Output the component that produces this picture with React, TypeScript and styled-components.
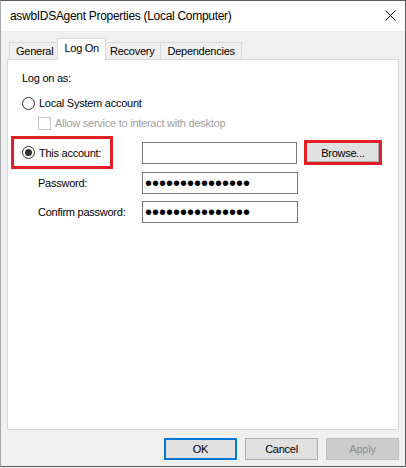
import React from "react";
import styled, { createGlobalStyle, css } from "styled-components";

const Global = createGlobalStyle`
  html, body { margin: 0; padding: 0; background: #f0f0f0; }
  body { font-family: "Liberation Sans", Arial, sans-serif; color: #000; }
  * { box-sizing: border-box; }
`;

const Window = styled.div`
  width: 406px;
  height: 467px;
  display: flex;
  flex-direction: column;
  border: 1px solid #5c5c5c;
  border-left-color: #a6a6a6;
  background: #f0f0f0;
`;

const TitleBar = styled.div`
  height: 30px;
  flex: none;
  background: #fff;
  display: flex;
  align-items: center;
  justify-content: space-between;
  padding: 0 9px 1px 9px;
`;

const Title = styled.span`
  font-size: 12px;
  letter-spacing: -0.3px;
`;

const CloseIcon = styled.svg`
  width: 11px;
  height: 11px;
  display: block;
`;

const Body = styled.div`
  flex: 1;
  display: flex;
  flex-direction: column;
  padding: 7px 6px 6px 6px;
`;

const TabStrip = styled.div`
  height: 21px;
  flex: none;
  display: flex;
  align-items: flex-end;
  padding-left: 3px;
`;

const Tab = styled.div<{ $active?: boolean }>`
  height: 17px;
  padding: 0 6px;
  margin-left: -1px;
  border: 1px solid #d9d9d9;
  border-bottom: none;
  background: #f0f0f0;
  font-size: 11px;
  letter-spacing: -0.25px;
  line-height: 16px;
  white-space: nowrap;
  ${(p) =>
    p.$active &&
    css`
      position: relative;
      z-index: 1;
      height: 22px;
      margin: 0 -2px -1px -3px;
      background: #fff;
      line-height: 18px;
    `}
`;

const Panel = styled.div`
  height: 371px;
  flex: none;
  background: #fff;
  border: 1px solid #d9d9d9;
  padding: 11px 0 0 3px;
  display: flex;
  flex-direction: column;
  align-items: flex-start;
`;

const Text = styled.span<{ $disabled?: boolean }>`
  font-size: 11px;
  letter-spacing: -0.25px;
  line-height: 14px;
  white-space: nowrap;
  color: ${(p) => (p.$disabled ? "#a0a0a0" : "#000")};
`;

const Heading = styled(Text)`
  margin-left: 11px;
  display: block;
`;

const OptionRow = styled.label<{ $indent: number; $top: number }>`
  display: flex;
  align-items: center;
  gap: 4px;
  height: 14px;
  margin-left: ${(p) => p.$indent}px;
  margin-top: ${(p) => p.$top}px;
`;

const Radio = styled.span<{ $checked?: boolean }>`
  width: 13px;
  height: 13px;
  flex: none;
  border-radius: 50%;
  border: 1px solid #333;
  background: #fff;
  display: inline-flex;
  align-items: center;
  justify-content: center;
  &::after {
    content: "";
    width: 7px;
    height: 7px;
    border-radius: 50%;
    background: #333;
    display: ${(p) => (p.$checked ? "block" : "none")};
  }
`;

const CheckBox = styled.span`
  width: 13px;
  height: 13px;
  flex: none;
  border: 1px solid #c6c6c6;
  background: #fff;
`;

const AccountGrid = styled.div`
  margin-top: 6px;
  display: grid;
  grid-template-columns: 131px 162px auto;
  grid-template-rows: 33px 25px 29px;
  align-items: end;
`;

const Highlight = styled.div`
  border: 3px solid #e31e25;
  align-self: center;
`;

const AccountHighlight = styled(Highlight)`
  width: 102px;
  height: 33px;
  display: flex;
  align-items: center;
  gap: 4px;
  padding-left: 8px;
`;

const FieldLabel = styled(Text)`
  padding-left: 27px;
  line-height: 22px;
`;

const TextBox = styled.input<{ $width: number }>`
  width: ${(p) => p.$width}px;
  height: 22px;
  margin: 0;
  padding: 0 0 0 2px;
  border: 1px solid #7a7a7a;
  border-radius: 0;
  background: #fff;
  outline: none;
  font-family: "Liberation Sans", Arial, sans-serif;
  font-size: 20px;
  line-height: 20px;
  color: #000;
  align-self: ${(p) => (p.$width === 155 ? "center" : "end")};
`;

const BaseButton = styled.button`
  margin: 0;
  padding: 0;
  font-family: "Liberation Sans", Arial, sans-serif;
  font-size: 11px;
  letter-spacing: -0.25px;
  color: #000;
  background: #e1e1e1;
  border: 1px solid #adadad;
  border-radius: 0;
`;

const BrowseButton = styled(BaseButton)`
  display: block;
  width: 72px;
  height: 19px;
  border-left-color: #e1e1e1;
  border-top-color: #e1e1e1;
`;

const Footer = styled.div`
  margin-top: 8px;
  display: flex;
  justify-content: flex-end;
  gap: 8px;
`;

const DialogButton = styled(BaseButton)<{ $variant?: "default" | "disabled" }>`
  width: 73px;
  height: 22px;
  ${(p) =>
    p.$variant === "default" &&
    css`
      border: 2px solid #0078d7;
    `}
  ${(p) =>
    p.$variant === "disabled" &&
    css`
      background: #cccccc;
      border-color: #bfbfbf;
      color: #8f8f8f;
    `}
`;

export default function App() {
  return (
    <>
      <Global />
      <Window>
        <TitleBar>
          <Title>aswbIDSAgent Properties (Local Computer)</Title>
          <CloseIcon viewBox="0 0 11 11">
            <path d="M0.5 0.5 L10.5 10.5 M10.5 0.5 L0.5 10.5" stroke="#000" strokeWidth="1" fill="none" />
          </CloseIcon>
        </TitleBar>
        <Body>
          <TabStrip>
            <Tab>General</Tab>
            <Tab $active>Log On</Tab>
            <Tab>Recovery</Tab>
            <Tab>Dependencies</Tab>
          </TabStrip>
          <Panel>
            <Heading>Log on as:</Heading>
            <OptionRow $indent={11} $top={11}>
              <Radio />
              <Text>Local System account</Text>
            </OptionRow>
            <OptionRow $indent={27} $top={6}>
              <CheckBox />
              <Text $disabled>Allow service to interact with desktop</Text>
            </OptionRow>
            <AccountGrid>
              <AccountHighlight>
                <Radio $checked />
                <Text>This account:</Text>
              </AccountHighlight>
              <TextBox $width={155} readOnly defaultValue="" />
              <Highlight>
                <BrowseButton>Browse...</BrowseButton>
              </Highlight>
              <FieldLabel>Password:</FieldLabel>
              <TextBox $width={156} type="password" readOnly defaultValue="aaaaaaaaaaaaaaa" />
              <span />
              <FieldLabel>Confirm password:</FieldLabel>
              <TextBox $width={156} type="password" readOnly defaultValue="aaaaaaaaaaaaaaa" />
              <span />
            </AccountGrid>
          </Panel>
          <Footer>
            <DialogButton $variant="default">OK</DialogButton>
            <DialogButton>Cancel</DialogButton>
            <DialogButton $variant="disabled" disabled>
              Apply
            </DialogButton>
          </Footer>
        </Body>
      </Window>
    </>
  );
}
